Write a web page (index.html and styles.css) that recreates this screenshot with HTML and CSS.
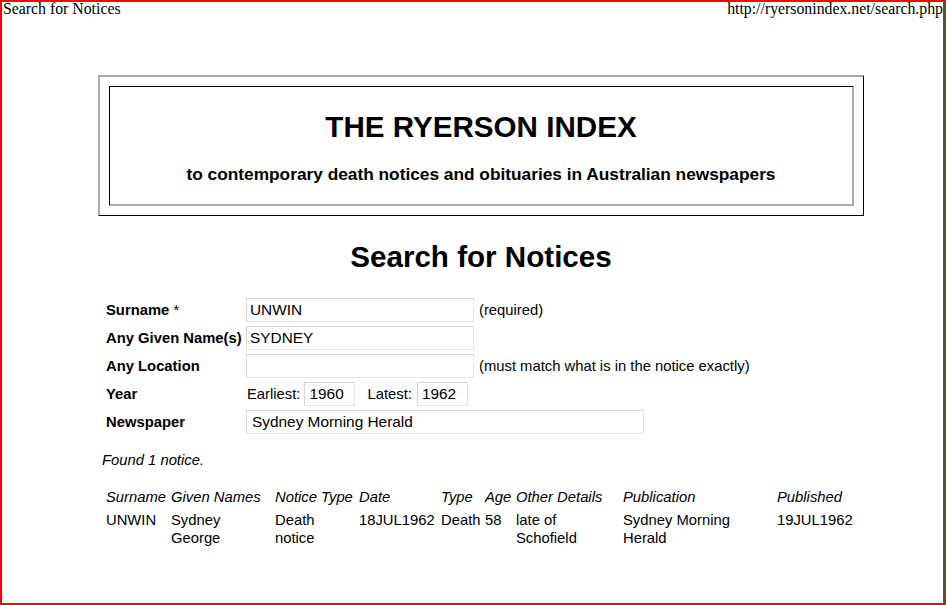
FILE: index.html
```html
<!DOCTYPE html>
<html lang="en">
<head>
<meta charset="utf-8">
<title>Search for Notices</title>
<link rel="stylesheet" href="styles.css">
</head>
<body>
<div class="frame">
  <div class="page">
    <header class="print-head">
      <span>Search for Notices</span>
      <span>http://ryersonindex.net/search.php</span>
    </header>

    <main class="content">
      <div class="banner">
        <div class="banner-inner">
          <h2 class="banner-title">THE RYERSON INDEX</h2>
          <h3 class="banner-sub">to contemporary death notices and obituaries in Australian newspapers</h3>
        </div>
      </div>

      <h1 class="page-title">Search for Notices</h1>

      <form class="search">
        <label class="field-label" for="surname">Surname <span class="req">*</span></label>
        <div class="field">
          <input class="text-box wide" id="surname" type="text" value="UNWIN">
          <span class="hint">(required)</span>
        </div>

        <label class="field-label" for="given">Any Given Name(s)</label>
        <div class="field">
          <input class="text-box wide" id="given" type="text" value="SYDNEY">
        </div>

        <label class="field-label" for="location">Any Location</label>
        <div class="field">
          <input class="text-box wide" id="location" type="text" value="">
          <span class="hint">(must match what is in the notice exactly)</span>
        </div>

        <span class="field-label">Year</span>
        <div class="field">
          <label class="year-label" for="earliest">Earliest:</label>
          <input class="text-box year" id="earliest" type="text" value="1960">
          <label class="year-label latest" for="latest">Latest:</label>
          <input class="text-box year" id="latest" type="text" value="1962">
        </div>

        <span class="field-label">Newspaper</span>
        <div class="field">
          <div class="select-box">Sydney Morning Herald</div>
        </div>
      </form>

      <p class="found">Found 1 notice.</p>

      <table class="results">
        <colgroup>
          <col class="c-surname">
          <col class="c-given">
          <col class="c-notice">
          <col class="c-date">
          <col class="c-type">
          <col class="c-age">
          <col class="c-other">
          <col class="c-pub">
          <col class="c-published">
        </colgroup>
        <thead>
          <tr>
            <th>Surname</th>
            <th>Given Names</th>
            <th>Notice Type</th>
            <th>Date</th>
            <th>Type</th>
            <th>Age</th>
            <th>Other Details</th>
            <th>Publication</th>
            <th>Published</th>
          </tr>
        </thead>
        <tbody>
          <tr>
            <td>UNWIN</td>
            <td>Sydney George</td>
            <td>Death notice</td>
            <td>18JUL1962</td>
            <td>Death</td>
            <td>58</td>
            <td>late of Schofield</td>
            <td>Sydney Morning Herald</td>
            <td>19JUL1962</td>
          </tr>
        </tbody>
      </table>
    </main>
  </div>
</div>
</body>
</html>
```

FILE: styles.css
```css
* {
  box-sizing: border-box;
}

html,
body {
  margin: 0;
  padding: 0;
  background: #ffffff;
}

body {
  font-family: "Liberation Sans", Arial, sans-serif;
  font-size: 14.8px;
  color: #000000;
}

/* red outline round the printed sheet */
.frame {
  width: 946px;
  height: 605px;
  border-style: solid;
  border-color: #ff0000;
  border-width: 2px 1px 2px 2px;
  overflow: hidden;
}

.page {
  height: 100%;
  border-right: 2px solid #555555;
}

/* print header: page title left, address right */
.print-head {
  display: flex;
  justify-content: space-between;
  padding: 0 0 0 1px;
  font-family: "Liberation Serif", "Times New Roman", serif;
  font-size: 15.8px;
  line-height: 14px;
  white-space: nowrap;
}

.content {
  width: 766px;
  margin: 59px 0 0 96px;
}

/* masthead: outset table border with an inset cell */
.banner {
  border-style: solid;
  border-width: 2px 1px 1px 2px;
  border-color: #a9a9a9 #000000 #000000 #a9a9a9;
  padding: 9px;
}

.banner-inner {
  height: 120px;
  border-style: solid;
  border-width: 1px 2px 2px 1px;
  border-color: #000000 #a9a9a9 #a9a9a9 #000000;
  padding-top: 23px;
  text-align: center;
}

.banner-title {
  margin: 0 0 20px;
  font-size: 29.6px;
  line-height: 34px;
  font-weight: bold;
}

.banner-sub {
  margin: 0;
  font-size: 17.3px;
  line-height: 20px;
  font-weight: bold;
}

.page-title {
  margin: 24px 0 0;
  font-size: 29.6px;
  line-height: 34px;
  font-weight: bold;
  text-align: center;
}

/* search form */
.search {
  display: grid;
  grid-template-columns: 140px 1fr;
  grid-auto-rows: 28px;
  align-items: center;
  margin: 22px 0 0;
  padding-left: 8px;
  line-height: 17px;
}

.field-label {
  font-weight: bold;
  white-space: nowrap;
}

.req {
  font-weight: normal;
}

.field {
  display: flex;
  align-items: center;
  white-space: nowrap;
}

.text-box,
.select-box {
  height: 24px;
  margin: 0;
  border-style: solid;
  border-width: 1px;
  border-color: #d6d6d6 #e6e6e6 #e6e6e6 #d6d6d6;
  background: #ffffff;
  font-family: "Liberation Sans", Arial, sans-serif;
  font-size: 15.4px;
  color: #000000;
  outline: none;
}

.text-box {
  padding: 0 3px;
}

.wide {
  width: 228px;
}

.year {
  width: 51px;
  padding-left: 4px;
}

.hint {
  margin-left: 5px;
}

.year-label {
  margin: 0 4px 0 1px;
}

.year-label.latest {
  margin-left: 12px;
  margin-right: 5px;
}

.select-box {
  width: 398px;
  padding: 0 5px;
  line-height: 22px;
}

.found {
  margin: 16px 0 0 4px;
  font-style: italic;
  line-height: 17px;
}

/* results listing */
.results {
  margin: 19px 0 0 5px;
  width: 758px;
  table-layout: fixed;
  border-collapse: collapse;
  line-height: 19px;
}

.c-surname { width: 65px; }
.c-given { width: 104px; }
.c-notice { width: 84px; }
.c-date { width: 82px; }
.c-type { width: 44px; }
.c-age { width: 31px; }
.c-other { width: 107px; }
.c-pub { width: 154px; }
.c-published { width: 87px; }

.results th,
.results td {
  padding: 0 0 0 3px;
  text-align: left;
  vertical-align: top;
}

.results th {
  padding-bottom: 4px;
  font-weight: normal;
  font-style: italic;
  white-space: nowrap;
}

.results td {
  line-height: 18px;
}
```
